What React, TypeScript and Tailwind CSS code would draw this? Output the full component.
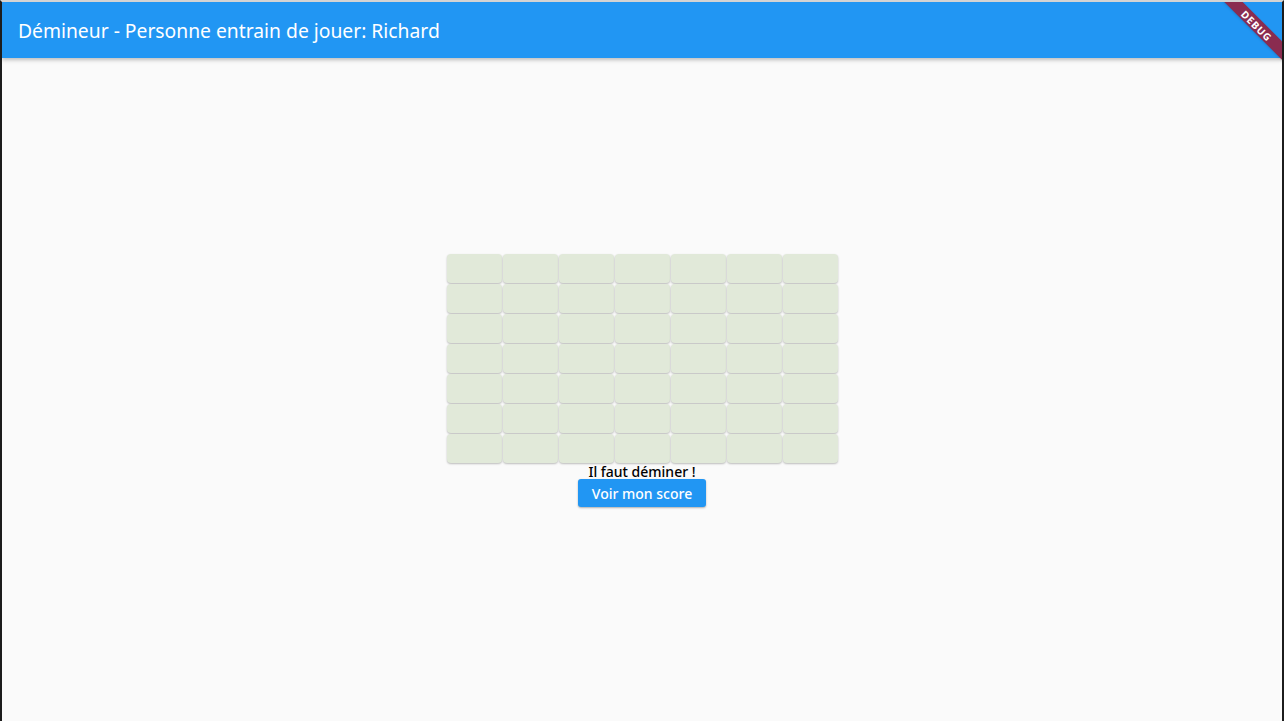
const ROWS = 7;
const COLS = 7;

function DebugBanner() {
    return (
        <div className="absolute top-0 right-0 w-[80px] h-[80px] overflow-hidden pointer-events-none">
            <div className="absolute left-[-5.5px] top-[17px] w-[120px] h-[13px] rotate-45 bg-[#8a2c50] flex items-center justify-center shadow-sm">
                <span className="text-[10px] font-bold text-white leading-none tracking-[0.8px]">DEBUG</span>
            </div>
        </div>
    );
}

function Tile() {
    return <div className="h-[29px] rounded-[4px] bg-[#e1e9d9] shadow-[0_1px_2px_rgba(0,0,0,0.25)]" />;
}

export default function App() {
    return (
        <div
            className="relative w-full h-[721px] flex flex-col bg-[#fafafa] border-l-2 border-r-2 border-t-2 border-l-[#1c1c1c] border-r-[#1c1c1c] border-t-[#d3d3d3] overflow-hidden"
            style={{ fontFamily: '"Noto Sans", "Open Sans", sans-serif' }}
        >
            <header className="relative z-10 h-[56px] shrink-0 bg-[#2196f3] flex items-center px-4 shadow-[0_2px_4px_rgba(0,0,0,0.25)]">
                <h1 className="text-white text-[19.3px] font-normal pt-[2px]">Démineur - Personne entrain de jouer: Richard</h1>
                <DebugBanner />
            </header>

            <main className="flex-1 flex flex-col items-center pt-[196px]">
                <div className="grid grid-cols-[repeat(7,55px)] gap-px">
                    {Array.from({ length: ROWS * COLS }).map((_, i) => (
                        <Tile key={i} />
                    ))}
                </div>
                <p className="text-[14px] leading-[15px] text-black font-medium mt-px">Il faut déminer !</p>
                <button className="h-[28px] px-[14px] rounded-[3px] bg-[#2196f3] text-white text-[14px] font-medium shadow-[0_1px_2px_rgba(0,0,0,0.3)]">
                    Voir mon score
                </button>
            </main>
        </div>
    );
}
